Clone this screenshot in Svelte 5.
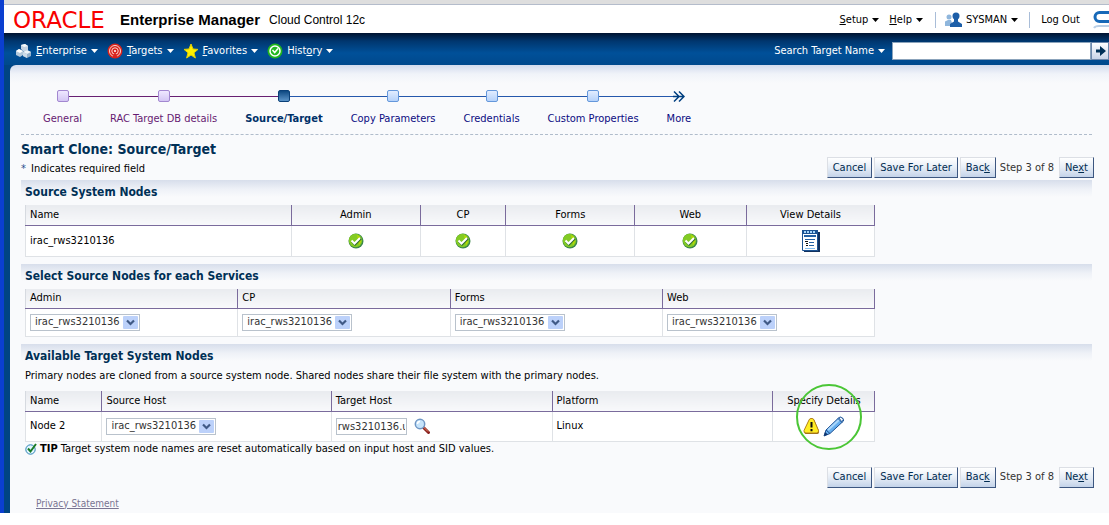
<script>
  let sourceNode = $state({ admin: "irac_rws3210136", cp: "irac_rws3210136", forms: "irac_rws3210136", web: "irac_rws3210136" });
  let sourceHost = $state("irac_rws3210136");
  let targetHost = $state("rws3210136.us.oracle.com");
  let search = $state("");

  const hosts = ["irac_rws3210136"];

  const menus = [
    { icon: "cubes", pre: "", key: "E", post: "nterprise" },
    { icon: "target", pre: "", key: "T", post: "argets" },
    { icon: "star", pre: "", key: "F", post: "avorites" },
    { icon: "clock", pre: "Hist", key: "o", post: "ry" },
  ];

  const steps = [
    { label: "General", state: "visited" },
    { label: "RAC Target DB details", state: "visited" },
    { label: "Source/Target", state: "current" },
    { label: "Copy Parameters", state: "next" },
    { label: "Credentials", state: "next" },
    { label: "Custom Properties", state: "next" },
    { label: "More", state: "more" },
  ];

  const services = [
    { id: "admin", label: "Admin" },
    { id: "cp", label: "CP" },
    { id: "forms", label: "Forms" },
    { id: "web", label: "Web" },
  ];
</script>

{#snippet caret()}
  <svg class="caret" width="7" height="4" viewBox="0 0 7 4" aria-hidden="true"><path d="M0 0h7L3.5 4z" fill="currentColor" /></svg>
{/snippet}

{#snippet menuIcon(name)}
  {#if name === "cubes"}
    <svg width="16" height="16" viewBox="0 0 16 16" aria-hidden="true">
      <path d="M5 2l4-1 3 2v4L8 9 5 6z" fill="#c3d2e2" />
      <path d="M5 2l4-1 3 2-4 1z" fill="#f4f8fb" />
      <path d="M0 8l3-2 4 2v4l-3 2-4-2z" fill="#b3c8db" />
      <path d="M0 8l3-2 4 2-3 2z" fill="#fff" />
      <path d="M7 9l4-2 4 2v4l-4 2-4-2z" fill="#94b0cb" />
      <path d="M7 9l4-2 4 2-4 2z" fill="#edf3f8" />
      <path d="M7 9l4 2v4l-4-2z" fill="#cddbe8" />
    </svg>
  {:else if name === "target"}
    <svg width="16" height="16" viewBox="0 0 16 16" aria-hidden="true">
      <circle cx="8" cy="8" r="7.5" fill="#d8231c" />
      <g fill="none" stroke="#ffd5cc">
        <circle cx="8" cy="8" r="5.5" />
        <circle cx="8" cy="8" r="3.2" />
      </g>
      <circle cx="8" cy="8" r="1" fill="#fff" />
      <path d="M8 9l-3 6h6z" fill="#d8231c" />
    </svg>
  {:else if name === "star"}
    <svg width="16" height="16" viewBox="0 0 16 16" aria-hidden="true">
      <path d="M8 1l2 5 5 .4-4 3.4 1.4 5.2L8 12l-4.4 3L5 9.8 1 6.4 6 6z" fill="#fff200" stroke="#e5d000" />
    </svg>
  {:else}
    <svg width="16" height="16" viewBox="0 0 16 16" aria-hidden="true">
      <circle cx="8" cy="8" r="7.5" fill="#20b51d" />
      <circle cx="8" cy="8" r="5" fill="#25b822" stroke="#fff" stroke-width="1.5" />
      <path d="M5.5 7l2.2 2.5L11 5.5" fill="none" stroke="#fff" stroke-width="1.5" />
    </svg>
  {/if}
{/snippet}

{#snippet okIcon()}
  <svg width="16" height="16" viewBox="0 0 16 16" role="img" aria-label="Available">
    <circle cx="8" cy="8" r="7.5" fill="#3d874b" />
    <circle cx="7.5" cy="7.5" r="6.7" fill="#83cb24" />
    <path d="M9 2a6 6 0 0 1 2 10z" fill="#b6d900" />
    <path d="M4 8.5l3 3 6-6" fill="none" stroke="#2b6a2e" stroke-width="2" />
    <path d="M3.5 7.5l3 3 5.5-5.5" fill="none" stroke="#fff" stroke-width="2" />
  </svg>
{/snippet}

{#snippet chevron()}
  <svg class="chevron" width="15" height="13" viewBox="0 0 15 13" aria-hidden="true">
    <rect width="15" height="13" rx="1" fill="#bcd1fa" />
    <path d="M4 4.5l3.5 3.5L11 4.5" fill="none" stroke="#405a86" stroke-width="2.2" />
  </svg>
{/snippet}

{#snippet wizardButtons()}
  <div class="wizard-buttons">
    <button>Cancel</button>
    <button>Save For Later</button>
    <button>Bac<u>k</u></button>
    <span class="step-count">Step 3 of 8</span>
    <button>Ne<u>x</u>t</button>
  </div>
{/snippet}

<div class="frame">
  <header class="brand-bar">
    <div class="brand">
      <span class="oracle">ORACLE</span>
      <span class="product">Enterprise Manager</span>
      <span class="edition">Cloud Control 12c</span>
    </div>
    <div class="account">
      <button class="menu"><span><u>S</u>etup</span>{@render caret()}</button>
      <button class="menu help"><span><u>H</u>elp</span>{@render caret()}</button>
      <button class="menu user">
        <svg width="17" height="16" viewBox="0 0 17 16" aria-hidden="true">
          <circle cx="4" cy="5" r="2.5" fill="#8fb6dc" />
          <path d="M0 14V9.5L3 8h3l2 6z" fill="#8fb6dc" />
          <circle cx="11" cy="4" r="3.5" fill="#1c5ea8" />
          <path d="M5 15v-3l4-2.5V7h4v2.5l4 2.5v3z" fill="#1c5ea8" />
        </svg>
        <span>SYSMAN</span>{@render caret()}
      </button>
      <a class="logout" href="#logout">Log Out</a>
      <svg class="ring" width="17" height="20" viewBox="0 0 17 20" aria-hidden="true">
        <path d="M17 2.5H7.5a4.5 4.5 0 0 0 0 9H17" fill="none" stroke="#1769b8" stroke-width="3" />
        <path d="M2 18q1-2 5-2h10" fill="none" stroke="#b9cfe6" stroke-width="2" />
      </svg>
    </div>
  </header>

  <nav class="menu-bar">
    <div class="menus">
      {#each menus as m}
        <button class="menu">
          {@render menuIcon(m.icon)}
          <span>{m.pre}<u>{m.key}</u>{m.post}</span>
          {@render caret()}
        </button>
      {/each}
    </div>
    <form class="search">
      <label for="search">Search Target Name</label>
      {@render caret()}
      <input id="search" type="text" bind:value={search} />
      <button type="button" aria-label="Search">
        <svg width="11" height="10" viewBox="0 0 11 10" aria-hidden="true"><path d="M1 3.5h4V0l6 5-6 5V6.5H1z" fill="#003057" /></svg>
      </button>
    </form>
  </nav>

  <main>
    <ol class="train">
      {#each steps as s}
        <li class={s.state}>
          <div class="rail">
            {#if s.state === "more"}
              <svg width="12" height="11" viewBox="0 0 12 11" aria-hidden="true">
                <path d="M0 5.5h10M1 .5l5 5-5 5M6 .5l5 5-5 5" fill="none" stroke="#003f80" stroke-width="1.5" />
              </svg>
            {:else}
              <span class="stop"></span>
            {/if}
          </div>
          <a href="#step">{s.label}</a>
        </li>
      {/each}
    </ol>

    <div class="title-row">
      <div>
        <h1>Smart Clone: Source/Target</h1>
        <p class="required"><span>*</span> Indicates required field</p>
      </div>
      {@render wizardButtons()}
    </div>

    <section>
      <h2>Source System Nodes</h2>
      <table class="source">
        <colgroup><col class="w31" /><col class="w15" /><col class="w10" /><col class="w15" /><col class="w13" /><col class="w15" /></colgroup>
        <thead>
          <tr>
            <th>Name</th>
            {#each services as s}
              <th class="center">{s.label}</th>
            {/each}
            <th class="center">View Details</th>
          </tr>
        </thead>
        <tbody>
          <tr>
            <td>irac_rws3210136</td>
            {#each services as s}
              <td class="center">{@render okIcon()}</td>
            {/each}
            <td class="center">
              <button class="icon-button" aria-label="View Details">
                <svg width="18" height="22" viewBox="0 0 18 22" aria-hidden="true">
                  <path d="M2 2h16v20H2z" fill="#12325f" />
                  <path d="M.5 .5h15v20H.5z" fill="#fff" stroke="#1b5292" />
                  <path d="M0 0h16v4H0z" fill="#1b5292" />
                  <path d="M2 2h12" stroke="#a4d5fa" stroke-width="2" stroke-dasharray="2 1" />
                  <path d="M2 6h12" stroke="#2260a4" stroke-width="2" />
                  <path d="M3 9.5h10M7 12.5h5M7 15.5h5" stroke="#2260a4" />
                  <path d="M3 11.5h3M4 13.5h2M4 15.5h2" stroke="#111" />
                  <path d="M3 18.5h10" stroke="#83bdf0" />
                </svg>
              </button>
            </td>
          </tr>
        </tbody>
      </table>
    </section>

    <section>
      <h2>Select Source Nodes for each Services</h2>
      <table class="services">
        <thead>
          <tr>
            {#each services as s}
              <th id="th-{s.id}">{s.label}</th>
            {/each}
          </tr>
        </thead>
        <tbody>
          <tr>
            {#each services as s}
              <td>
                <span class="select">
                  <select aria-labelledby="th-{s.id}" bind:value={sourceNode[s.id]}>
                    {#each hosts as h}
                      <option value={h}>{h}</option>
                    {/each}
                  </select>
                  {@render chevron()}
                </span>
              </td>
            {/each}
          </tr>
        </tbody>
      </table>
    </section>

    <section>
      <h2>Available Target System Nodes</h2>
      <p class="note">Primary nodes are cloned from a source system node. Shared nodes share their file system with the primary nodes.</p>
      <table class="targets">
        <colgroup><col class="w9" /><col class="w27" /><col class="w26" /><col class="w26" /><col class="w12" /></colgroup>
        <thead>
          <tr>
            <th>Name</th>
            <th id="th-source-host">Source Host</th>
            <th id="th-target-host">Target Host</th>
            <th>Platform</th>
            <th class="center">Specify Details</th>
          </tr>
        </thead>
        <tbody>
          <tr>
            <td>Node 2</td>
            <td>
              <span class="select">
                <select aria-labelledby="th-source-host" bind:value={sourceHost}>
                  {#each hosts as h}
                    <option value={h}>{h}</option>
                  {/each}
                </select>
                {@render chevron()}
              </span>
            </td>
            <td>
              <div class="lookup">
                <input type="text" aria-labelledby="th-target-host" bind:value={targetHost} />
                <button class="icon-button" aria-label="Search host">
                  <svg width="16" height="16" viewBox="0 0 16 16" aria-hidden="true">
                    <path d="M9.5 9.5l5 5" stroke="#8c2320" stroke-width="3" stroke-linecap="round" />
                    <path d="M9.5 9l4.5 4.5" stroke="#e98e6c" />
                    <circle cx="6" cy="6" r="4.7" fill="#c6e4fb" stroke="#6f96c4" stroke-width="1.5" />
                    <path d="M3.5 6A2.5 2.5 0 0 1 6 3.5" stroke="#fff" stroke-width="1.5" fill="none" />
                  </svg>
                </button>
              </div>
            </td>
            <td>Linux</td>
            <td class="center">
              <div class="details">
                <svg width="17" height="17" viewBox="0 0 17 17" role="img" aria-label="Warning">
                  <path d="M6 2.5q.5-1.5 2-1.5h1.500q1.5 0 2 1.5l4.500 10.5q.5 3-2 3H3q-2 0-1.500-3z" fill="#8c6414" />
                  <path d="M6 2q.5-1.500 2-1.500h1q1.500 0 2 1.500l4.500 10.500q.5 2.500-2 2.500H3q-2.500 0-2-2.500z" fill="#ffed24" stroke="#b5811a" />
                  <path d="M8.500 4v5.500M8.500 11v2.200" stroke="#111" stroke-width="2" />
                </svg>
                <button class="icon-button" aria-label="Edit details">
                  <svg width="22" height="21" viewBox="0 0 22 21" aria-hidden="true">
                    <path d="M1 20l2-6L16 1.500q2-1 3.500.5t1 3L7 17.500z" fill="#65aeee" stroke="#1d4f91" />
                    <path d="M5 14L17 3" stroke="#a9d6fb" stroke-width="2" />
                    <path d="M15 2.500l4 4M3 14l4 3.500" stroke="#1d4f91" />
                    <path d="M16 2l1.500-.7q2 .2 2.700 2.200L19 6z" fill="#fff" stroke="#3567a4" />
                    <path d="M1 20l1-4 3 2.500z" fill="#12366d" />
                  </svg>
                </button>
                <span class="highlight"></span>
              </div>
            </td>
          </tr>
        </tbody>
      </table>
      <p class="tip">
        <svg width="12" height="12" viewBox="0 0 12 12" aria-hidden="true">
          <circle cx="5.5" cy="6.5" r="4.7" fill="#e2f5ff" stroke="#2b83b5" />
          <path d="M3 5.5l2.5 3L11 1" fill="none" stroke="#187a24" stroke-width="2" />
        </svg>
        <span><b>TIP</b> Target system node names are reset automatically based on input host and SID values.</span>
      </p>
    </section>

    <div class="bottom-row">{@render wizardButtons()}</div>
    <footer><a href="#privacy">Privacy Statement</a></footer>
  </main>
</div>

<style>
  :global(body) {
    background: #fff;
  }

  .frame,
  .frame :global(*) {
    box-sizing: border-box;
  }

  .frame {
    font-family: "DejaVu Sans Condensed", "DejaVu Sans", Tahoma, sans-serif;
    font-size: 11px;
    line-height: 14px;
    color: #000;
    border-left: 4px solid #0b3fd0;
    background: #004482;
    overflow: hidden;
  }

  button,
  input,
  select {
    font: inherit;
    color: inherit;
    margin: 0;
  }

  svg {
    display: block;
    flex: none;
  }

  .brand-bar {
    display: flex;
    justify-content: space-between;
    height: 33px;
    border-top: 4px solid #dedede;
    background: #fff;
    box-shadow: inset 0 1px #b4bccb;
  }

  .brand,
  .account,
  .menus,
  .menu,
  .search {
    display: flex;
    align-items: center;
  }

  .brand {
    padding: 2px 0 0 9px;
    font-family: "Liberation Sans", Arial, sans-serif;
    white-space: nowrap;
  }

  .oracle {
    width: 107px;
    font-family: "DejaVu Sans", sans-serif;
    font-size: 23px;
    color: #f80000;
  }

  .product {
    font-size: 15px;
    font-weight: bold;
  }

  .edition {
    margin-left: 9px;
    font-size: 12px;
  }

  .menu {
    gap: 4px;
    padding: 0;
    border: 0;
    background: none;
    white-space: nowrap;
  }

  .account {
    padding-top: 2px;
  }

  .help {
    margin-left: 10px;
    margin-right: 12px;
  }

  .user {
    height: 16px;
    padding: 0 11px 0 9px;
    border: solid #a9bdd8;
    border-width: 0 1px;
  }

  .logout {
    margin: 0 12px 0 11px;
    color: inherit;
    text-decoration: none;
    white-space: nowrap;
  }

  .menu-bar {
    display: flex;
    justify-content: space-between;
    height: 32px;
    color: #fff;
    background: linear-gradient(#001330, #00366e 8px, #005099 20px, #00498c);
  }

  .menus {
    gap: 9px;
    padding: 3px 0 0 12px;
  }

  .search {
    gap: 4px;
    padding-top: 3px;
  }

  .search input {
    width: 199px;
    height: 18px;
    margin-left: 3px;
    border: 1px solid #8ba3bb;
    background: #fff;
    color: #000;
  }

  .search button {
    display: flex;
    align-items: center;
    justify-content: center;
    width: 18px;
    height: 18px;
    margin-left: -4px;
    padding: 0;
    border: 1px solid #6d88ac;
    background: linear-gradient(#fff, #c8d4e8);
  }

  main {
    margin-left: 6px;
    padding: 24px 17px 2px 11px;
    border-top-left-radius: 6px;
    background: linear-gradient(#d3dbed, #f0f3f9 9px, #f9fafc 18px);
  }

  .train {
    display: flex;
    margin: 0;
    padding: 0 0 8px 8px;
    list-style: none;
    border-bottom: 1px dashed #b0bccb;
  }

  .train li {
    text-align: center;
    color: #0b0b82;
  }

  .train a {
    display: block;
    padding: 9px 14px 0;
    color: inherit;
    text-decoration: none;
    white-space: nowrap;
  }

  .rail {
    display: flex;
    align-items: center;
    height: 14px;
  }

  .rail::before,
  .rail::after {
    content: "";
    flex: 1;
    height: 1px;
    background: #2558ac;
  }

  .visited .rail::before,
  .visited .rail::after,
  .current .rail::before {
    background: #682072;
  }

  .train li:first-child .rail::before,
  .more .rail::after {
    background: none;
  }

  .stop {
    width: 12px;
    height: 12px;
    border: 1px solid #6497db;
    border-radius: 2px;
    background: linear-gradient(#e2edff, #b5d2fa);
  }

  .visited .stop {
    border-color: #a287d0;
    background: linear-gradient(#efe8ff, #d4c6f4);
  }

  .current .stop {
    border-color: #0a4078;
    background: linear-gradient(#0d4881, #5c94c8);
  }

  .train .visited {
    color: #661a72;
  }

  .train .current {
    color: #003068;
    font-weight: bold;
  }

  .title-row {
    display: flex;
    justify-content: space-between;
    height: 45px;
  }

  h1 {
    margin: 6px 0 0;
    font-size: 14px;
    line-height: 17px;
    color: #003056;
  }

  .required {
    margin: 4px 0 0;
  }

  .required span {
    margin-right: 2px;
    color: #2b4c8c;
  }

  .wizard-buttons {
    display: flex;
    align-items: center;
    gap: 2px;
    margin-right: -2px;
    white-space: nowrap;
  }

  .title-row .wizard-buttons {
    padding-top: 20px;
  }

  .wizard-buttons button {
    height: 21px;
    padding: 0 5px;
    border: 1px solid #dcdfe5;
    border-right-color: #3c5680;
    border-bottom-color: #3c5680;
    background: linear-gradient(#fff, #e6edf6 50%, #c4d3e9);
    color: #002b50;
  }

  .step-count {
    margin: 0 3px 0 2px;
    color: #333;
  }

  section {
    padding: 0 0 7px 4px;
    background: linear-gradient(#d7deeb, #eef1f7 9px, #f9fafc 17px);
  }

  h2 {
    margin: 0;
    padding: 4px 0 5px;
    font-size: 12px;
    line-height: 16px;
    color: #003056;
  }

  table {
    width: 79.7%;
    table-layout: fixed;
    border-collapse: collapse;
    background: #fff;
  }

  .w9 { width: 9%; }
  .w10 { width: 10%; }
  .w12 { width: 12%; }
  .w13 { width: 13%; }
  .w15 { width: 15%; }
  .w26 { width: 26%; }
  .w27 { width: 27%; }
  .w31 { width: 31%; }

  th {
    height: 20px;
    padding: 0 4px;
    border-right: 1px solid #7a6b9c;
    border-bottom: 1px solid #7a6b9c;
    background: linear-gradient(#e9ebef, #f8f9fb);
    font-weight: normal;
    text-align: left;
    white-space: nowrap;
  }

  th:first-child {
    border-left: 1px solid #d6dae0;
  }

  td {
    height: 31px;
    padding: 0 4px;
    border: 1px solid #dfe2e6;
    border-top: 0;
  }

  .services td {
    height: 28px;
    padding-bottom: 1px;
  }

  .center {
    text-align: center;
  }

  .center > svg,
  .center > .icon-button {
    margin: 0 auto;
  }

  .icon-button {
    display: block;
    width: fit-content;
    padding: 0;
    border: 0;
    background: none;
  }

  .select {
    position: relative;
    display: block;
    width: 110px;
  }

  .select select {
    display: block;
    width: 100%;
    height: 17px;
    padding: 0 18px 0 4px;
    appearance: none;
    border: 1px solid #b9c2cc;
    border-radius: 0;
    background: #fff;
    color: #333;
    line-height: 14px;
  }

  .chevron {
    position: absolute;
    top: 2px;
    right: 2px;
    pointer-events: none;
  }

  .note {
    margin: 0;
    padding-bottom: 8px;
  }

  .lookup {
    display: flex;
    align-items: center;
    gap: 7px;
  }

  .lookup input {
    width: 71px;
    height: 17px;
    padding: 0 1px;
    border: 1px solid #b9c2cc;
    background: #fff;
    color: #333;
  }

  .targets td {
    height: 30px;
  }

  .details {
    position: relative;
    display: flex;
    align-items: center;
    justify-content: center;
    gap: 3px;
  }

  /* ring that overlaps the header and the cell */
  .highlight {
    position: absolute;
    left: 50%;
    top: 50%;
    width: 66px;
    height: 66px;
    margin: -42px 0 0 -28px;
    border: 2px solid #4bc636;
    border-radius: 50%;
    pointer-events: none;
  }

  .tip {
    display: flex;
    align-items: center;
    gap: 3px;
    margin: 0;
  }

  .bottom-row {
    display: flex;
    justify-content: flex-end;
    padding-top: 4px;
  }

  footer {
    padding: 9px 0 0 15px;
    font-size: 10px;
    line-height: 14px;
  }

  footer a {
    color: #7a7592;
  }
</style>
